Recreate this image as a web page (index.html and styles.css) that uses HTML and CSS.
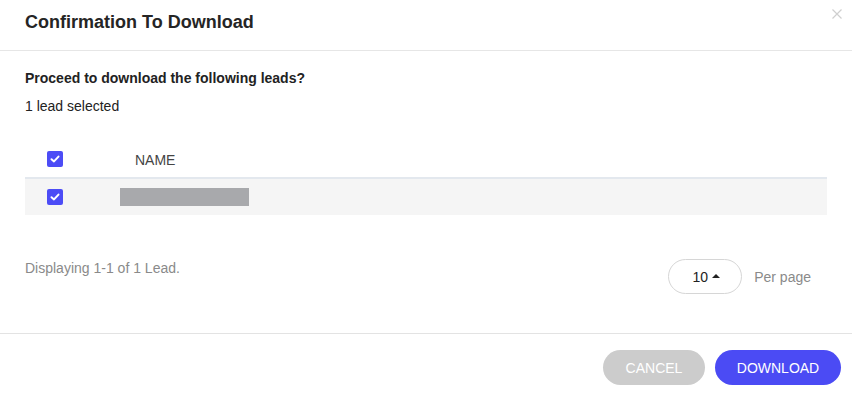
FILE: index.html
```html
<!DOCTYPE html>
<html>
<head>
<meta charset="utf-8">
<link rel="stylesheet" href="styles.css">
</head>
<body>
<div class="modal">
  <div class="modal-header">
    <h1 class="title">Confirmation To Download</h1>
    <button class="close" aria-label="Close">
      <svg width="10" height="10" viewBox="0 0 10 10"><path d="M0.5 0.5L9.5 9.5M9.5 0.5L0.5 9.5" stroke="#cfcfcf" stroke-width="1.2"/></svg>
    </button>
  </div>
  <div class="modal-body">
    <p class="question">Proceed to download the following leads?</p>
    <p class="count">1 lead selected</p>
    <div class="table">
      <div class="row head">
        <div class="cell-check"><span class="checkbox"><svg width="10" height="8" viewBox="0 0 10 8"><path d="M1.5 4.2L4 6.4L8.5 1.6" stroke="#fff" stroke-width="2" fill="none" stroke-linecap="round" stroke-linejoin="round"/></svg></span></div>
        <div class="cell-name">NAME</div>
      </div>
      <div class="row body">
        <div class="cell-check"><span class="checkbox"><svg width="10" height="8" viewBox="0 0 10 8"><path d="M1.5 4.2L4 6.4L8.5 1.6" stroke="#fff" stroke-width="2" fill="none" stroke-linecap="round" stroke-linejoin="round"/></svg></span></div>
        <div class="cell-name"><span class="redacted"></span></div>
      </div>
    </div>
    <div class="pager">
      <span class="displaying">Displaying 1-1 of 1 Lead.</span>
      <div class="per-page">
        <button class="size">10 <span class="caret"></span></button>
        <span class="per-label">Per page</span>
      </div>
    </div>
  </div>
  <div class="modal-footer">
    <button class="btn cancel">CANCEL</button>
    <button class="btn download">DOWNLOAD</button>
  </div>
</div>
</body>
</html>
```
FILE: styles.css
```css
* { box-sizing: border-box; }
html, body { margin: 0; padding: 0; background: #fff; }
body { font-family: "Liberation Sans", Arial, sans-serif; color: #222; }
.modal { width: 852px; height: 400px; display: flex; flex-direction: column; }
.modal-header {
  height: 51px;
  border-bottom: 1px solid #e6e6e6;
  display: flex;
  justify-content: space-between;
  align-items: flex-start;
  padding: 0 10px 0 25px;
}
.title { margin: 12px 0 0; font-size: 18px; font-weight: bold; color: #252525; line-height: 21px; }
.close { border: 0; background: none; padding: 0; margin-top: 9px; width: 10px; height: 10px; display: flex; }
.modal-body { padding: 0 25px; flex: 1; }
.question { margin: 19px 0 0; font-size: 14px; font-weight: bold; line-height: 16px; color: #222; }
.count { margin: 12px 0 0; font-size: 14px; line-height: 16px; color: #222; }
.table { margin-top: 28px; width: 802px; }
.row { display: flex; align-items: center; }
.row.head { height: 37px; border-bottom: 2px solid #e3e8ee; }
.row.body { height: 36px; background: #f5f5f5; }
.cell-check { width: 95px; padding-left: 22px; display: flex; }
.cell-name { font-size: 14px; color: #444; }
.row.head .cell-name { padding-left: 15px; padding-top: 1px; }
.checkbox {
  width: 16px; height: 16px; border-radius: 2px; background: #4c4cf6;
  display: flex; align-items: center; justify-content: center;
}
.row.head .checkbox { margin-top: -1px; }
.row.body .checkbox { margin-top: 0; }
.redacted { display: block; width: 129px; height: 18px; background: #a8a9ac; margin-top: 0; }
.pager { margin-top: 44px; display: flex; justify-content: space-between; align-items: flex-start; }
.displaying { font-size: 14px; color: #8a8a8a; margin-top: 1px; }
.per-page { display: flex; align-items: center; gap: 12px; margin-right: 16px; }
.size {
  width: 74px; height: 35px; border: 1px solid #d6d6d6; border-radius: 18px; background: #fff;
  font-family: "Liberation Sans", Arial, sans-serif; font-size: 14px; color: #222;
  display: flex; align-items: center; justify-content: center; gap: 4px; padding: 0 0 0 2px;
}
.caret { width: 0; height: 0; border-left: 4px solid transparent; border-right: 4px solid transparent; border-bottom: 4px solid #222; margin-top: -1px; }
.per-label { font-size: 14px; color: #8a8a8a; }
.modal-footer {
  height: 67px; border-top: 1px solid #e3e3e3;
  display: flex; justify-content: flex-end; align-items: flex-start;
  padding: 16px 11px 0 0; gap: 10px;
}
.btn {
  height: 35px; border: 0; border-radius: 18px; color: #fff;
  font-family: "Liberation Sans", Arial, sans-serif; font-size: 14px;
}
.cancel { width: 102px; background: #cccccc; }
.download { width: 126px; background: #4b4bf4; }
```
